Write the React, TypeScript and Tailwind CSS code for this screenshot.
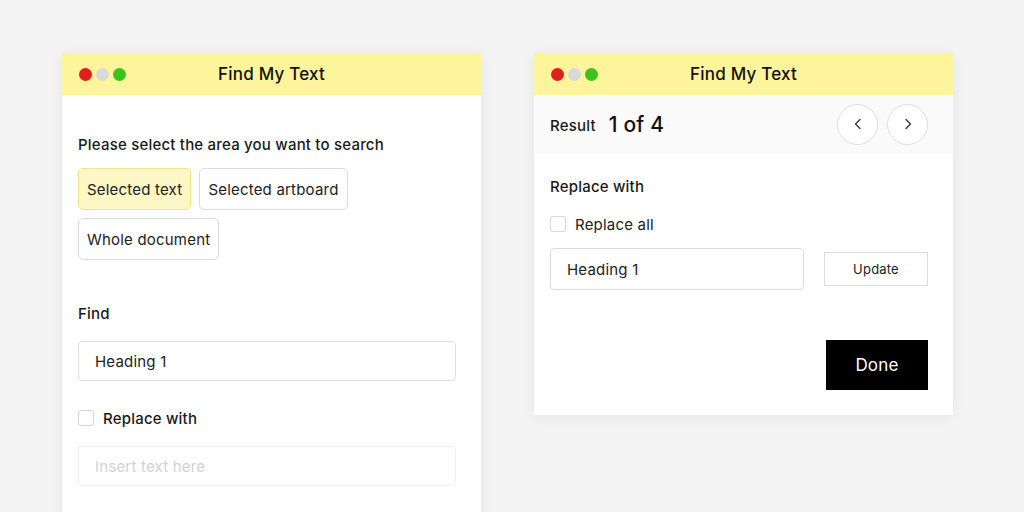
import React from "react";

const font = { fontFamily: 'Inter, "Open Sans", sans-serif' };

const TitleBar = () => (
  <div className="relative flex h-[42px] items-center bg-[#fdf49b] px-[17px]">
    <div className="flex gap-[4px]">
      <span className="h-[13px] w-[13px] rounded-full bg-[#e0201c]" />
      <span className="h-[13px] w-[13px] rounded-full bg-[#d9d9d9]" />
      <span className="h-[13px] w-[13px] rounded-full bg-[#3cc21b]" />
    </div>
    <div className="absolute inset-0 flex items-center justify-center pt-[2px] text-[17px] font-medium text-[#111]">
      Find My Text
    </div>
  </div>
);

const Checkbox = () => (
  <span className="h-[16px] w-[16px] rounded-[3px] border border-[#d6d6d6] bg-white" />
);

const Chevron = ({ dir }: { dir: "left" | "right" }) => (
  <svg width="14" height="14" viewBox="0 0 14 14" fill="none">
    <path
      d={dir === "left" ? "M9 2.5 L4.5 7 L9 11.5" : "M5 2.5 L9.5 7 L5 11.5"}
      stroke="#333"
      strokeWidth="1.3"
      strokeLinecap="round"
      strokeLinejoin="round"
    />
  </svg>
);

const SearchPanel = () => (
  <div className="h-[520px] w-[419px] shrink-0 bg-white shadow-[0_2px_14px_rgba(0,0,0,0.07)]">
    <TitleBar />
    <div className="flex flex-col pl-[16px] pr-[25px] pt-[40px]">
      <p className="text-[15px] leading-[20px] font-medium text-[#1a1a1a]">
        Please select the area you want to search
      </p>
      <div className="mt-[13px] flex flex-wrap gap-[8px]">
        <button className="h-[42px] rounded-[5px] border border-[#f3e586] bg-[#fdf8c6] px-[8px] pt-[2px] text-[15px] text-[#222]">
          Selected text
        </button>
        <button className="h-[42px] rounded-[5px] border border-[#dcdcdc] bg-white px-[8px] pt-[2px] text-[15px] text-[#222]">
          Selected artboard
        </button>
        <button className="h-[42px] rounded-[5px] border border-[#dcdcdc] bg-white px-[8px] pt-[2px] text-[15px] text-[#222]">
          Whole document
        </button>
      </div>
      <p className="mt-[44px] text-[15px] leading-[20px] font-medium text-[#1a1a1a]">
        Find
      </p>
      <div className="mt-[17px] flex h-[40px] items-center rounded-[4px] border border-[#e0e0e0] px-[16px] pt-[2px] text-[15px] text-[#222]">
        Heading 1
      </div>
      <div className="mt-[27px] flex h-[20px] items-center gap-[9px]">
        <Checkbox />
        <span className="pt-[2px] text-[15px] font-medium text-[#1a1a1a]">
          Replace with
        </span>
      </div>
      <div className="mt-[18px] flex h-[40px] items-center rounded-[4px] border border-[#f0f0f0] px-[16px] pt-[2px] text-[15px] text-[#d2d2d2]">
        Insert text here
      </div>
    </div>
  </div>
);

const ResultPanel = () => (
  <div className="w-[419px] shrink-0 bg-white shadow-[0_2px_14px_rgba(0,0,0,0.07)]">
    <TitleBar />
    <div className="flex h-[58px] items-center justify-between bg-[#fafafa] pl-[16px] pr-[25px]">
      <div className="flex items-center gap-[13px]">
        <span className="mt-[5px] text-[15px] font-medium text-[#1a1a1a]">
          Result
        </span>
        <span className="mt-[1px] text-[21px] font-medium text-[#111]">
          1 of 4
        </span>
      </div>
      <div className="flex gap-[9px]">
        <button className="flex h-[41px] w-[41px] items-center justify-center rounded-full border border-[#dedede] bg-white">
          <Chevron dir="left" />
        </button>
        <button className="flex h-[41px] w-[41px] items-center justify-center rounded-full border border-[#dedede] bg-white">
          <Chevron dir="right" />
        </button>
      </div>
    </div>
    <div className="flex flex-col pb-[25px] pl-[16px] pr-[25px] pt-[24px]">
      <p className="text-[15px] leading-[20px] font-medium text-[#1a1a1a]">
        Replace with
      </p>
      <div className="mt-[17px] flex h-[20px] items-center gap-[9px]">
        <Checkbox />
        <span className="pt-[2px] text-[15px] text-[#222]">Replace all</span>
      </div>
      <div className="mt-[14px] flex items-center justify-between">
        <div className="flex h-[42px] w-[254px] items-center rounded-[4px] border border-[#dcdcdc] px-[16px] pt-[2px] text-[15px] text-[#222]">
          Heading 1
        </div>
        <button className="h-[34px] w-[104px] border border-[#dcdcdc] bg-white pt-[2px] text-[13px] text-[#222]">
          Update
        </button>
      </div>
      <div className="mt-[50px] flex justify-end">
        <button className="h-[50px] w-[102px] bg-black pt-[2px] text-[17px] text-white">
          Done
        </button>
      </div>
    </div>
  </div>
);

export default function App() {
  return (
    <div
      className="flex h-[512px] w-[1024px] items-start gap-[53px] overflow-hidden bg-[#f4f4f4] pl-[62px] pt-[53px] tracking-[0.2px]"
      style={font}
    >
      <SearchPanel />
      <ResultPanel />
    </div>
  );
}
